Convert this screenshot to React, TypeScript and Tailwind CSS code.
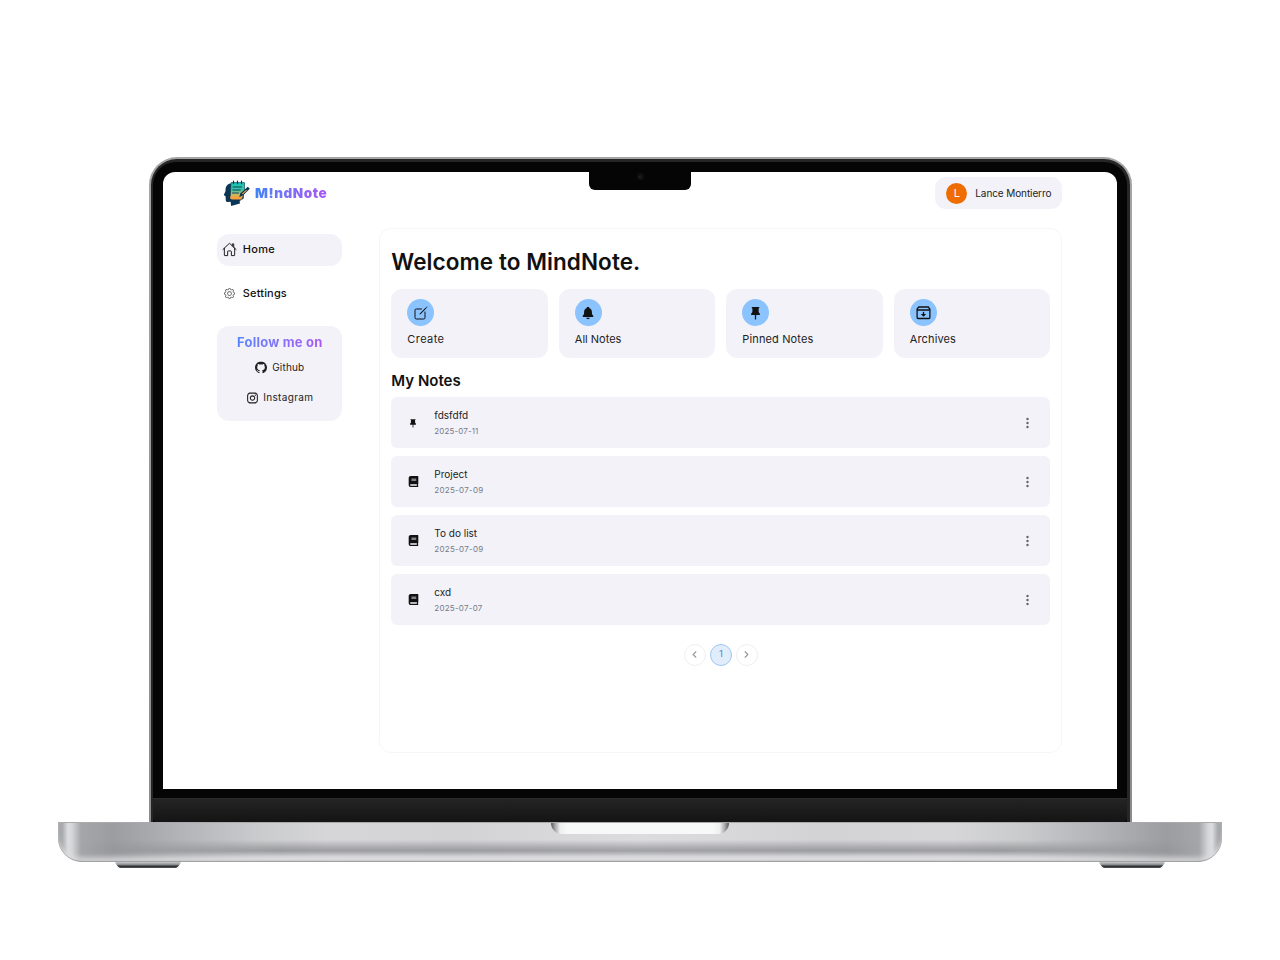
import type { ReactNode } from 'react';
import { IoCreateOutline, IoHomeOutline, IoNotificationsSharp } from 'react-icons/io5';
import { BsGear, BsGithub, BsThreeDotsVertical } from 'react-icons/bs';
import { FaBook } from 'react-icons/fa';
import { RiInstagramLine, RiPushpin2Fill } from 'react-icons/ri';
import { ChevronLeft, ChevronRight } from 'lucide-react';

function Logo() {
  return (
    <svg className="h-[27px] w-[28px] shrink-0" viewBox="0 0 28 27">
      <defs>
        <linearGradient id="pad" x1="0" y1="0" x2="0" y2="1">
          <stop offset="0" stopColor="#12c4b4" />
          <stop offset="0.45" stopColor="#3fc4a4" />
          <stop offset="0.75" stopColor="#c9b860" />
          <stop offset="1" stopColor="#f5a03c" />
        </linearGradient>
      </defs>
      <path d="M7 3.500C3.600 4.500 2.200 7.500 2.600 11L1 14.600c-.3.6 0 1 .8 1.100l.7.2.3 4c.1 1.500.8 2.100 2 2l2.800-.2.5 4.300 8.800-2.600-.2-2.400 4-2.500V5z" fill="#0b3554" />
      <path d="M8 2.600h13.500v9.200l-2.300 7.200H9.500c-2 0-2.600-1-2.200-2.600z" fill="url(#pad)" stroke="#0b3554" strokeWidth="0.6" />
      <path d="M7.500 16.200h10.800c-.8 1.400 0 3.200 1.500 3.200H9.300c-2 0-2.500-1.700-1.800-3.200z" fill="#f7a23f" />
      <path d="M10.500 1v2.600M14.500 1v2.600M18.500 1v2.600" stroke="#0b3554" strokeWidth="1.200" strokeLinecap="round" />
      <path d="M10 7h8.500M9.800 10h7.600M9.500 13h6" stroke="#0b3554" strokeWidth="0.9" strokeLinecap="round" />
      <path d="M16.200 16.900l1.300-3.600 7.300-6.600 2 2.100-7.200 6.900z" fill="#0b3554" />
      <path d="M19 13.600l4.200-3.900.7.7-4.300 4z" fill="#f59a3c" />
    </svg>
  );
}

function ArchiveIcon() {
  return (
    <svg className="h-[14px] w-[15px]" viewBox="0 0 15 14" fill="none" stroke="currentColor" strokeWidth="1.300">
      <path d="M2.700 1h9.600l1.600 2.200v8.300a1 1 0 0 1-1 1H2.100a1 1 0 0 1-1-1V3.200zM1.100 4h12.800" strokeLinejoin="round" />
      <path d="M7.500 5.800v2.400" />
      <path d="M4.800 7.900h5.400L7.500 10.700z" fill="currentColor" stroke="none" />
    </svg>
  );
}

const actions: { label: string; tracking: string; icon: ReactNode }[] = [
  { label: 'Create', tracking: 'tracking-[0.42px]', icon: <IoCreateOutline size={16} /> },
  { label: 'All Notes', tracking: 'tracking-normal', icon: <IoNotificationsSharp size={14} /> },
  { label: 'Pinned Notes', tracking: 'tracking-[0.13px]', icon: <RiPushpin2Fill size={15} /> },
  { label: 'Archives', tracking: 'tracking-[0.12px]', icon: <ArchiveIcon /> },
];

const notes = [
  { title: 'fdsfdfd', date: '2025-07-11', pinned: true, tracking: 'tracking-[0.12px]' },
  { title: 'Project', date: '2025-07-09', pinned: false, tracking: 'tracking-[0.28px]' },
  { title: 'To do list', date: '2025-07-09', pinned: false, tracking: 'tracking-[0.28px]' },
  { title: 'cxd', date: '2025-07-07', pinned: false, tracking: 'tracking-[0.24px]' },
];

function Sidebar() {
  return (
    <aside className="mt-[6px] w-[125px] shrink-0">
      <div className="flex h-8 items-center rounded-[12px] bg-[#f3f2f9] pb-px pl-[5px] text-[11px] font-medium">
        <IoHomeOutline size={15} />
        <span className="ml-[5.5px] tracking-[0.28px]">Home</span>
      </div>
      <div className="mt-[11px] flex h-8 items-center pl-[7px] text-[11px] font-medium">
        <BsGear size={11} className="text-[#444]" />
        <span className="ml-[7.5px] tracking-[0.16px]">Settings</span>
      </div>
      <div className="mt-[17px] flex h-[95px] flex-col items-center rounded-[12px] bg-[#f3f2f9] pt-[7px] text-[10px] text-[#222]">
        <div className="bg-linear-to-r from-[#5185fb] to-[#a855f7] bg-clip-text text-[13px] leading-[18px] font-bold tracking-[0.23px] text-transparent">
          Follow me on
        </div>
        <div className="mt-[8px] flex h-4 items-center gap-[5px]">
          <BsGithub size={12} className="translate-y-[0.5px]" />
          <span className="tracking-[0.18px]">Github</span>
        </div>
        <div className="mt-[14px] flex h-4 items-center gap-[4px]">
          <RiInstagramLine size={13} className="translate-y-[0.5px]" />
          <span className="tracking-[0.36px]">Instagram</span>
        </div>
      </div>
    </aside>
  );
}

function NotesPanel() {
  return (
    <main className="h-[525px] w-[683px] rounded-[12px] border border-[#f6f6f9] px-[11px] pt-[17px]">
      <h1 className="text-[22.5px] leading-[32px] font-semibold tracking-[0.07px]">Welcome to MindNote.</h1>
      <div className="mt-[11px] grid grid-cols-4 gap-[11px]">
        {actions.map((a) => (
          <div key={a.label} className="h-[69px] rounded-[11px] bg-[#f3f2f9] px-4 pt-[10px]">
            <div className="flex size-[27px] items-center justify-center rounded-full bg-[#8bc3ff]">{a.icon}</div>
            <div className={`mt-[5px] text-[11px] leading-[16px] text-[#222] ${a.tracking}`}>{a.label}</div>
          </div>
        ))}
      </div>
      <h2 className="mt-[11px] text-[15px] leading-[24px] font-semibold">My Notes</h2>
      <div className="mt-[4px] flex flex-col gap-[8px]">
        {notes.map((n) => (
          <div key={n.title} className="flex h-[51px] items-center rounded-[6px] bg-[#f3f2f9] pr-[16.500px] pl-4">
            <div className="flex w-[12px] justify-center">{n.pinned ? <RiPushpin2Fill size={10} /> : <FaBook size={11} />}</div>
            <div className="ml-[15px] flex-1">
              <div className="text-[10px] leading-[16px] text-[#222]">{n.title}</div>
              <div className={`text-[8px] leading-[16px] text-[#757b87] ${n.tracking}`}>{n.date}</div>
            </div>
            <BsThreeDotsVertical size={13} className="translate-y-[0.5px] text-[#666]" />
          </div>
        ))}
      </div>
      <div className="mt-[18.500px] flex justify-center gap-[4px] text-[#999]">
        <div className="flex size-[22px] items-center justify-center rounded-full border border-[#efeff1]">
          <ChevronLeft size={11} strokeWidth={2.5} />
        </div>
        <div className="flex size-[22px] items-center justify-center rounded-full border border-[#9bc8f5] bg-[#e2edfb] text-[9.5px] text-[#4f86d0]">
          1
        </div>
        <div className="flex size-[22px] items-center justify-center rounded-full border border-[#efeff1]">
          <ChevronRight size={11} strokeWidth={2.5} />
        </div>
      </div>
    </main>
  );
}

function Screen() {
  return (
    <div className="h-[616.500px] w-[954px] rounded-t-[12px] bg-white pt-[5px] pr-[54.700px] pl-[54.300px]">
      <header className="flex h-8 items-center justify-between">
        <div className="flex items-center gap-[4px] pl-[5.7px]">
          <Logo />
          <span className="bg-linear-to-r from-[#3b82f6] to-[#a855f7] bg-clip-text text-[13.5px] leading-[20px] font-black tracking-[0.55px] text-transparent">
            M!ndNote
          </span>
        </div>
        <div className="flex h-8 w-[127px] items-center rounded-[11px] bg-[#f3f2f9] pl-[11px]">
          <div className="flex size-[21px] items-center justify-center rounded-full bg-[#ef6c00] text-[11px] text-white">L</div>
          <span className="ml-[8px] text-[10px] tracking-[-0.1px] whitespace-nowrap text-[#222]">Lance Montierro</span>
        </div>
      </header>
      <div className="mt-[19px] flex justify-between">
        <Sidebar />
        <NotesPanel />
      </div>
    </div>
  );
}

function Foot() {
  return (
    <svg className="h-[7px] w-[66px]" viewBox="0 0 68 7" preserveAspectRatio="none">
      <defs>
        <linearGradient id="foot" x1="0" y1="0" x2="0" y2="1">
          <stop offset="0" stopColor="#c9cbcd" />
          <stop offset="0.45" stopColor="#8b8d8f" />
          <stop offset="0.7" stopColor="#2c2e30" />
          <stop offset="1" stopColor="#55585a" />
        </linearGradient>
      </defs>
      <path d="M0 0h68c-1 2-3 5-5 6H5C3 5 1 2 0 0z" fill="url(#foot)" />
    </svg>
  );
}

export default function App() {
  return (
    <div className="flex h-[960px] w-[1280px] flex-col items-center overflow-hidden bg-white pt-[157px] font-['Inter','Liberation_Sans',sans-serif] text-[#111]">
      <div className="h-[665px] w-[983px] rounded-t-[28px] bg-linear-to-b from-[#a5a5a5] to-[#8c8c8c] p-[2px] pb-0">
        <div className="h-full rounded-t-[26px] bg-[#262626] p-[2.5px] pb-0">
          <div className="relative flex h-full flex-col rounded-t-[23px] bg-[#050505] pt-[10.5px]">
            <div className="flex justify-center">
              <Screen />
            </div>
            <div className="mt-[9.500px] h-[24px] rounded-b-[4px] border-t border-[#2c2c2c] bg-linear-to-b from-[#242424] to-[#141414]" />
            <div className="absolute top-[9.5px] left-1/2 flex h-[19px] w-[102px] -translate-x-1/2 justify-center rounded-b-[6px] bg-[#050505] pt-[2px]">
              <div className="flex size-[7px] items-center justify-center rounded-full bg-[#111]">
                <div className="size-[2px] rounded-full bg-[#242628]" />
              </div>
            </div>
          </div>
        </div>
      </div>
      <div className="relative h-[40px] w-[1164px] overflow-hidden rounded-t-[1px] rounded-b-[24px] bg-[#b5b6b8]">
        <div className="flex h-full justify-center bg-[linear-gradient(90deg,#9b9c9e_0,#a8a9ab_4px,#dcdde0_10px,#d5d6d8_14px,#a5a6a8_23px,#9c9da0_55px,#b2b3b6_120px,#cacbcd_200px,#d6d6d9_270px,#d3d3d6_400px,#dcdcdf_582px,#d3d3d6_764px,#d6d6d9_894px,#cacbcd_964px,#b2b3b6_1044px,#9c9da0_1109px,#a5a6a8_1141px,#d5d6d8_1150px,#dcdde0_1154px,#a8a9ab_1160px,#9b9c9e_100%)]">
          <div className="h-[12px] w-[178px] rounded-b-[11px] bg-[linear-gradient(90deg,#555_0,#a5a5a8_4px,#eeeeef_9px,#f7f8f8_16px,#f7f8f8_162px,#eeeeef_169px,#a5a5a8_174px,#555_100%)]" />
        </div>
        <div className="absolute inset-x-[22px] top-0 h-full bg-[linear-gradient(180deg,transparent_45%,rgba(80,81,85,0.32)_64%,rgba(80,81,85,0.42)_72%,rgba(210,211,214,0.5)_87%,rgba(225,225,228,0.85)_93%,#8f9092_98%,#b0b0b2_100%)] [mask-image:linear-gradient(90deg,transparent,black_200px,black_920px,transparent)]" />
        <div className="absolute inset-0 rounded-b-[24px] border-t border-b-[1.5px] border-t-[#a9aaac] border-b-[#a1a2a4] shadow-[inset_0_-4px_4px_#dadbddbb]" />
      </div>
      <div className="flex w-[1050px] justify-between">
        <Foot />
        <Foot />
      </div>
    </div>
  );
}
